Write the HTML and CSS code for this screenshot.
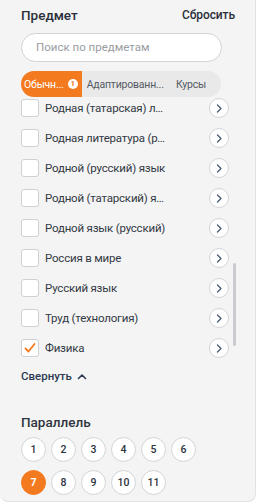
FILE: index.html
```html
<!DOCTYPE html>
<html lang="ru">
<head>
<meta charset="utf-8">
<link rel="stylesheet" href="styles.css">
</head>
<body>
<div class="panel">
  <div class="head">
    <span class="title">Предмет</span>
    <span class="reset">Сбросить</span>
  </div>
  <div class="search">Поиск по предметам</div>
  <div class="tabs">
    <div class="tab active"><span class="tab-text">Обычн...</span><span class="badge">1</span></div>
    <div class="tab mid"><span class="tab-text">Адаптированн...</span></div>
    <div class="tab last"><span class="tab-text">Курсы</span></div>
  </div>
  <div class="list-wrap">
    <div class="list">
      <div class="row"><span class="box"></span><span class="label">Право</span><span class="go"><svg width="8" height="9" viewBox="0 0 8 9"><path d="M2.5 1 L6 4.5 L2.5 8" fill="none" stroke="#4a5b73" stroke-width="1.3" stroke-linecap="round" stroke-linejoin="round"/></svg></span></div>
      <div class="row"><span class="box"></span><span class="label">Родная (татарская) литература</span><span class="go"><svg width="8" height="9" viewBox="0 0 8 9"><path d="M2.5 1 L6 4.5 L2.5 8" fill="none" stroke="#4a5b73" stroke-width="1.3" stroke-linecap="round" stroke-linejoin="round"/></svg></span></div>
      <div class="row"><span class="box"></span><span class="label">Родная литература (русская)</span><span class="go"><svg width="8" height="9" viewBox="0 0 8 9"><path d="M2.5 1 L6 4.5 L2.5 8" fill="none" stroke="#4a5b73" stroke-width="1.3" stroke-linecap="round" stroke-linejoin="round"/></svg></span></div>
      <div class="row"><span class="box"></span><span class="label">Родной (русский) язык</span><span class="go"><svg width="8" height="9" viewBox="0 0 8 9"><path d="M2.5 1 L6 4.5 L2.5 8" fill="none" stroke="#4a5b73" stroke-width="1.3" stroke-linecap="round" stroke-linejoin="round"/></svg></span></div>
      <div class="row"><span class="box"></span><span class="label">Родной (татарский) язык</span><span class="go"><svg width="8" height="9" viewBox="0 0 8 9"><path d="M2.5 1 L6 4.5 L2.5 8" fill="none" stroke="#4a5b73" stroke-width="1.3" stroke-linecap="round" stroke-linejoin="round"/></svg></span></div>
      <div class="row"><span class="box"></span><span class="label">Родной язык (русский)</span><span class="go"><svg width="8" height="9" viewBox="0 0 8 9"><path d="M2.5 1 L6 4.5 L2.5 8" fill="none" stroke="#4a5b73" stroke-width="1.3" stroke-linecap="round" stroke-linejoin="round"/></svg></span></div>
      <div class="row"><span class="box"></span><span class="label">Россия в мире</span><span class="go"><svg width="8" height="9" viewBox="0 0 8 9"><path d="M2.5 1 L6 4.5 L2.5 8" fill="none" stroke="#4a5b73" stroke-width="1.3" stroke-linecap="round" stroke-linejoin="round"/></svg></span></div>
      <div class="row"><span class="box"></span><span class="label">Русский язык</span><span class="go"><svg width="8" height="9" viewBox="0 0 8 9"><path d="M2.5 1 L6 4.5 L2.5 8" fill="none" stroke="#4a5b73" stroke-width="1.3" stroke-linecap="round" stroke-linejoin="round"/></svg></span></div>
      <div class="row"><span class="box"></span><span class="label">Труд (технология)</span><span class="go"><svg width="8" height="9" viewBox="0 0 8 9"><path d="M2.5 1 L6 4.5 L2.5 8" fill="none" stroke="#4a5b73" stroke-width="1.3" stroke-linecap="round" stroke-linejoin="round"/></svg></span></div>
      <div class="row"><span class="box checked"><svg width="14" height="14" viewBox="0 0 14 14"><path d="M2.5 7.5 L5.5 10.5 L11.5 3" fill="none" stroke="#f47a20" stroke-width="1.8" stroke-linecap="round" stroke-linejoin="round"/></svg></span><span class="label">Физика</span><span class="go"><svg width="8" height="9" viewBox="0 0 8 9"><path d="M2.5 1 L6 4.5 L2.5 8" fill="none" stroke="#4a5b73" stroke-width="1.3" stroke-linecap="round" stroke-linejoin="round"/></svg></span></div>
    </div>
    <div class="thumb"></div>
  </div>
  <div class="collapse">Свернуть <svg width="10" height="7" viewBox="0 0 10 7"><path d="M1.5 5.5 L5 2 L8.5 5.5" fill="none" stroke="#2c3a50" stroke-width="1.6" stroke-linecap="round" stroke-linejoin="round"/></svg></div>
  <div class="sub">Параллель</div>
  <div class="grades">
    <span class="g">1</span><span class="g">2</span><span class="g">3</span><span class="g">4</span><span class="g">5</span><span class="g">6</span>
    <span class="g on">7</span><span class="g">8</span><span class="g">9</span><span class="g">10</span><span class="g">11</span>
  </div>
</div>
</body>
</html>
```
FILE: styles.css
```css
* { box-sizing: border-box; }
html, body { margin: 0; background: #ffffff; }
body { font-family: Roboto, "Liberation Sans", sans-serif; color: #2f3440; }
.panel {
  width: 256px;
  height: 502px;
  background: #f4f4f4;
  border: 1px solid #e2e2e2;
  border-top: none;
  border-left: none;
  border-radius: 0 0 8px 8px;
  padding: 6px 20px 0 21px;
  position: relative;
}
.head { display: flex; justify-content: space-between; align-items: center; height: 17px; }
.title { font-size: 13.5px; font-weight: 500; color: #2b303b; }
.reset { font-size: 12px; font-weight: 500; color: #2b303b; letter-spacing: -0.1px; }
.search {
  margin-top: 10px;
  width: 201px;
  height: 29px;
  border: 1px solid #d3d3d6;
  border-radius: 15px;
  background: #fff;
  font-size: 11.5px;
  color: #9a9ca2;
  padding-left: 14px;
  line-height: 27px;
}
.tabs {
  margin-top: 9px;
  width: 200px;
  height: 26px;
  border-radius: 13px;
  background: #e9e9e9;
  display: flex;
  overflow: hidden;
  font-size: 10.5px;
  letter-spacing: -0.2px;
}
.tab { display: flex; align-items: center; white-space: nowrap; color: #555a63; }
.tab.active { flex: none; background: #f47a20; color: #fff; padding: 0 4px 0 3px; }
.tab.mid { flex: 1; padding-left: 5px; overflow: hidden; }
.tab.last { flex: none; width: 56px; justify-content: center; padding-right: 4px; }
.badge {
  width: 10px; height: 10px; border-radius: 50%;
  background: #fff; color: #f47a20;
  font-size: 8px; font-weight: 700; line-height: 10px;
  text-align: center; margin-left: 4px; flex: none; letter-spacing: 0;
}
.list-wrap { position: relative; height: 265px; margin-top: 1px; }
.list {
  height: 100%;
  overflow: hidden;
  display: flex;
  flex-direction: column;
  justify-content: flex-end;
}
.row { flex: none; height: 30px; width: 208px; display: flex; align-items: center; }
.box {
  width: 18px; height: 18px; border: 1px solid #cfd0d4; border-radius: 3px;
  background: #fff; flex: none;
  display: flex; align-items: center; justify-content: center;
}
.label {
  margin-left: 6px; width: 122px; font-size: 11.5px; letter-spacing: -0.2px; color: #333944;
  white-space: nowrap; overflow: hidden; text-overflow: ellipsis;
}
.go {
  margin-left: auto; width: 20px; height: 20px; border-radius: 50%;
  border: 1px solid #d3d4d8; background: #fff; flex: none;
  display: flex; align-items: center; justify-content: center;
}
.thumb {
  position: absolute; left: 212px; top: 165px;
  width: 3px; height: 83px; border-radius: 2px; background: #c9cbd1;
}
.collapse {
  margin-top: 5px; height: 16px; display: flex; align-items: center; gap: 5px;
  font-size: 11.5px; font-weight: 500; color: #2c3a50;
}
.sub { margin-top: 29px; font-size: 13.5px; font-weight: 500; color: #2f3440; height: 18px; line-height: 18px; }
.grades {
  margin-top: 6px;
  display: grid;
  grid-template-columns: repeat(6, 25px);
  column-gap: 5px;
  row-gap: 8px;
}
.g {
  width: 25px; height: 25px; border-radius: 50%;
  border: 1px solid #d3d4d8; background: #fff;
  display: flex; align-items: center; justify-content: center;
  font-size: 10.5px; font-weight: 500; color: #2c3340;
}
.g.on { background: #f47a20; border-color: #f47a20; color: #fff; font-weight: 700; }
```
